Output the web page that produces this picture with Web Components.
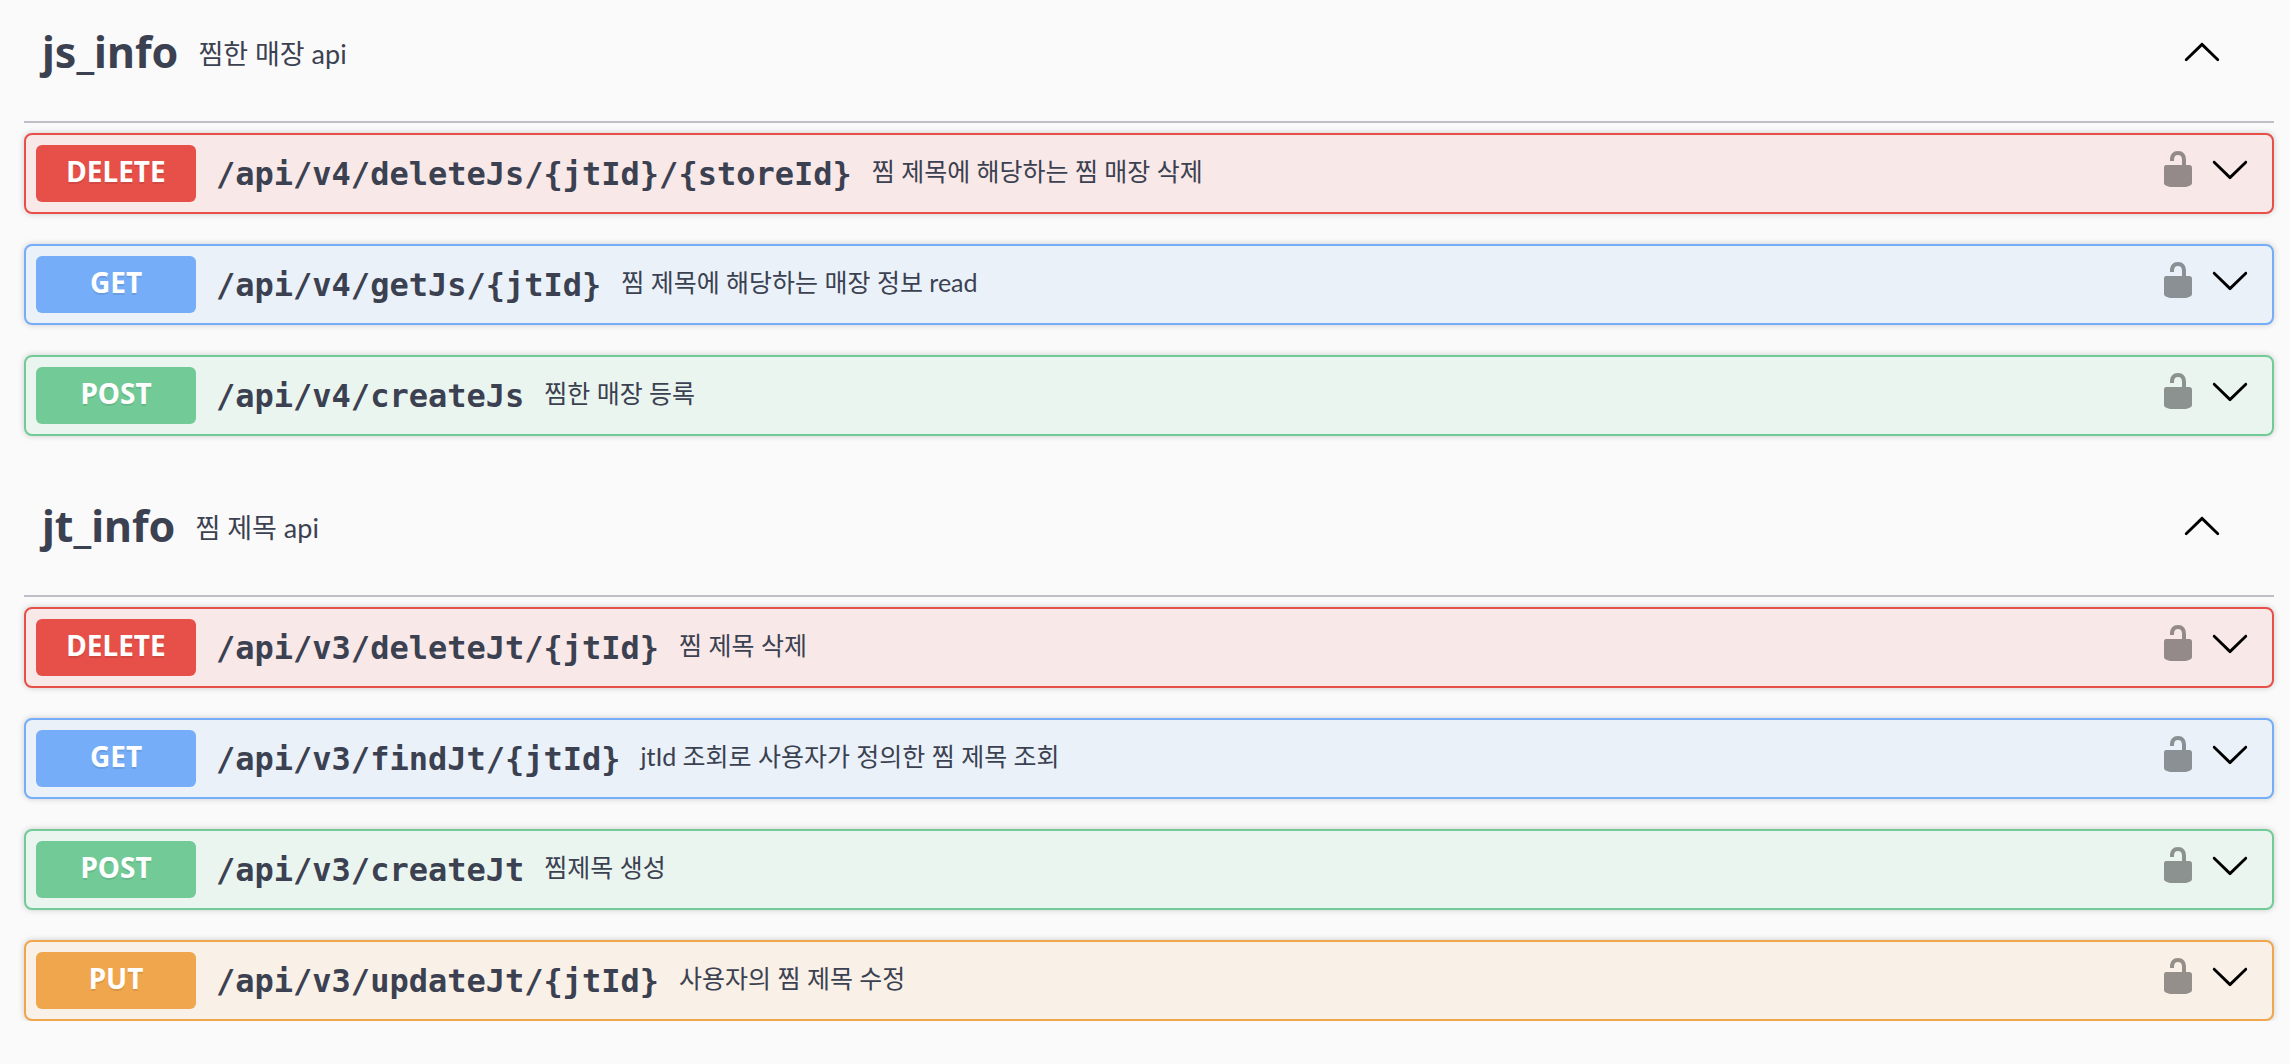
<!DOCTYPE html>
<html lang="ko">
<head>
<meta charset="utf-8">
<title>API</title>
<style>
body{margin:0;background:#fafafa;color:#3b4151;font-family:"Noto Sans","Noto Sans CJK KR",sans-serif}
main{display:flex;flex-direction:column;gap:38px;padding:0 16px 0 24px}
</style>
</head>
<body>
<main>
<api-tag name="js_info" note="찜한 매장 api">
<api-operation method="delete" path="/api/v4/deleteJs/{jtId}/{storeId}">찜 제목에 해당하는 찜 매장 삭제</api-operation>
<api-operation method="get" path="/api/v4/getJs/{jtId}">찜 제목에 해당하는 매장 정보 read</api-operation>
<api-operation method="post" path="/api/v4/createJs">찜한 매장 등록</api-operation>
</api-tag>
<api-tag name="jt_info" note="찜 제목 api">
<api-operation method="delete" path="/api/v3/deleteJt/{jtId}">찜 제목 삭제</api-operation>
<api-operation method="get" path="/api/v3/findJt/{jtId}">jtId 조회로 사용자가 정의한 찜 제목 조회</api-operation>
<api-operation method="post" path="/api/v3/createJt">찜제목 생성</api-operation>
<api-operation method="put" path="/api/v3/updateJt/{jtId}">사용자의 찜 제목 수정</api-operation>
</api-tag>
</main>
<script>
const arrow='<path d="M17.418 6.109c.272-.268.709-.268.979 0s.271.701 0 .969l-7.908 7.83c-.27.268-.707.268-.979 0l-7.908-7.83c-.27-.268-.27-.701 0-.969.271-.268.709-.268.979 0L10 13.25l7.418-7.141z"/>';
const shapes={
  down:arrow,
  up:'<g transform="rotate(180 10 10)">'+arrow+'</g>',
  lock:'<path d="M15.8 8H14V5.6C14 2.703 12.665 1 10 1 7.334 1 6 2.703 6 5.6V6h2v-.801C8 3.754 8.797 3 10 3c1.203 0 2 .754 2 2.199V8H4c-.553 0-1 .646-1 1.199V17c0 .549.428 1.139.951 1.307l1.197.387C5.672 18.861 6.55 19 7.1 19h5.8c.549 0 1.428-.139 1.951-.307l1.196-.387c.524-.167.953-.757.953-1.306V9.199C17 8.646 16.352 8 15.8 8z"/>'
};
class ApiIcon extends HTMLElement{
  connectedCallback(){
    this.attachShadow({mode:'open'}).innerHTML=`<style>:host{display:block;flex:none}svg{display:block;width:40px;height:40px;fill:currentColor}</style><svg viewBox="0 0 20 20" aria-hidden="true">${shapes[this.getAttribute('name')]}</svg>`;
  }
}
class ApiOperation extends HTMLElement{
  connectedCallback(){
    const m=this.getAttribute('method');
    this.attachShadow({mode:'open'}).innerHTML=`<style>
:host{display:flex;align-items:center;box-sizing:border-box;height:81px;padding:0 22px 0 10px;border:2px solid var(--c);border-radius:8px;background:var(--tint);box-shadow:0 0 6px rgba(0,0,0,.19)}
:host([method=delete]){--c:#e74f49;--tint:#f8e8e7}
:host([method=get]){--c:#75adf8;--tint:#eaf1f9}
:host([method=post]){--c:#72cb97;--tint:#ebf5f0}
:host([method=put]){--c:#efa64d;--tint:#f9f0e7}
button{font:inherit;color:inherit;background:none;border:0;padding:0;margin:0;cursor:pointer;text-align:left}
.summary{flex:1;display:flex;align-items:center;min-width:0}
.method{width:160px;height:57px;line-height:52px;border-radius:6px;background:var(--c);color:#fff;font-size:28px;font-weight:700;text-align:center;text-shadow:0 2px 0 rgba(0,0,0,.1)}
.path{padding:0 20px;font:700 32px/38px "DejaVu Sans Mono",monospace}
.text{font:25px/36px Lato,"Noto Sans CJK KR",sans-serif;padding-bottom:6px}
.auth,.toggle{color:#000;padding-bottom:9px}
.auth{opacity:.4;margin-right:12px}
</style><button class="summary"><span class="method">${m.toUpperCase()}</span><span class="path">${this.getAttribute('path')}</span><span class="text"><slot></slot></span></button><button class="auth" aria-label="authorize"><api-icon name="lock"></api-icon></button><button class="toggle" aria-label="expand"><api-icon name="down"></api-icon></button>`;
  }
}
class ApiTag extends HTMLElement{
  connectedCallback(){
    this.attachShadow({mode:'open'}).innerHTML=`<style>
:host{display:block}
header{display:flex;align-items:center;box-sizing:border-box;height:123px;padding:0 52px 16px 18px;border-bottom:2px solid #bfc0c7}
h3{margin:0;padding-bottom:2px;font-size:43px;line-height:64px}
p{flex:1;margin:0;padding:3px 20px 0;font:27px/40px Lato,"Noto Sans CJK KR",sans-serif}
button{color:#000;background:none;border:0;padding:0}
.list{display:flex;flex-direction:column;gap:30px;padding-top:10px}
</style><header><h3>${this.getAttribute('name')}</h3><p>${this.getAttribute('note')}</p><button aria-label="collapse"><api-icon name="up"></api-icon></button></header><div class="list"><slot></slot></div>`;
  }
}
customElements.define('api-icon',ApiIcon);
customElements.define('api-operation',ApiOperation);
customElements.define('api-tag',ApiTag);
</script>
</body>
</html>
